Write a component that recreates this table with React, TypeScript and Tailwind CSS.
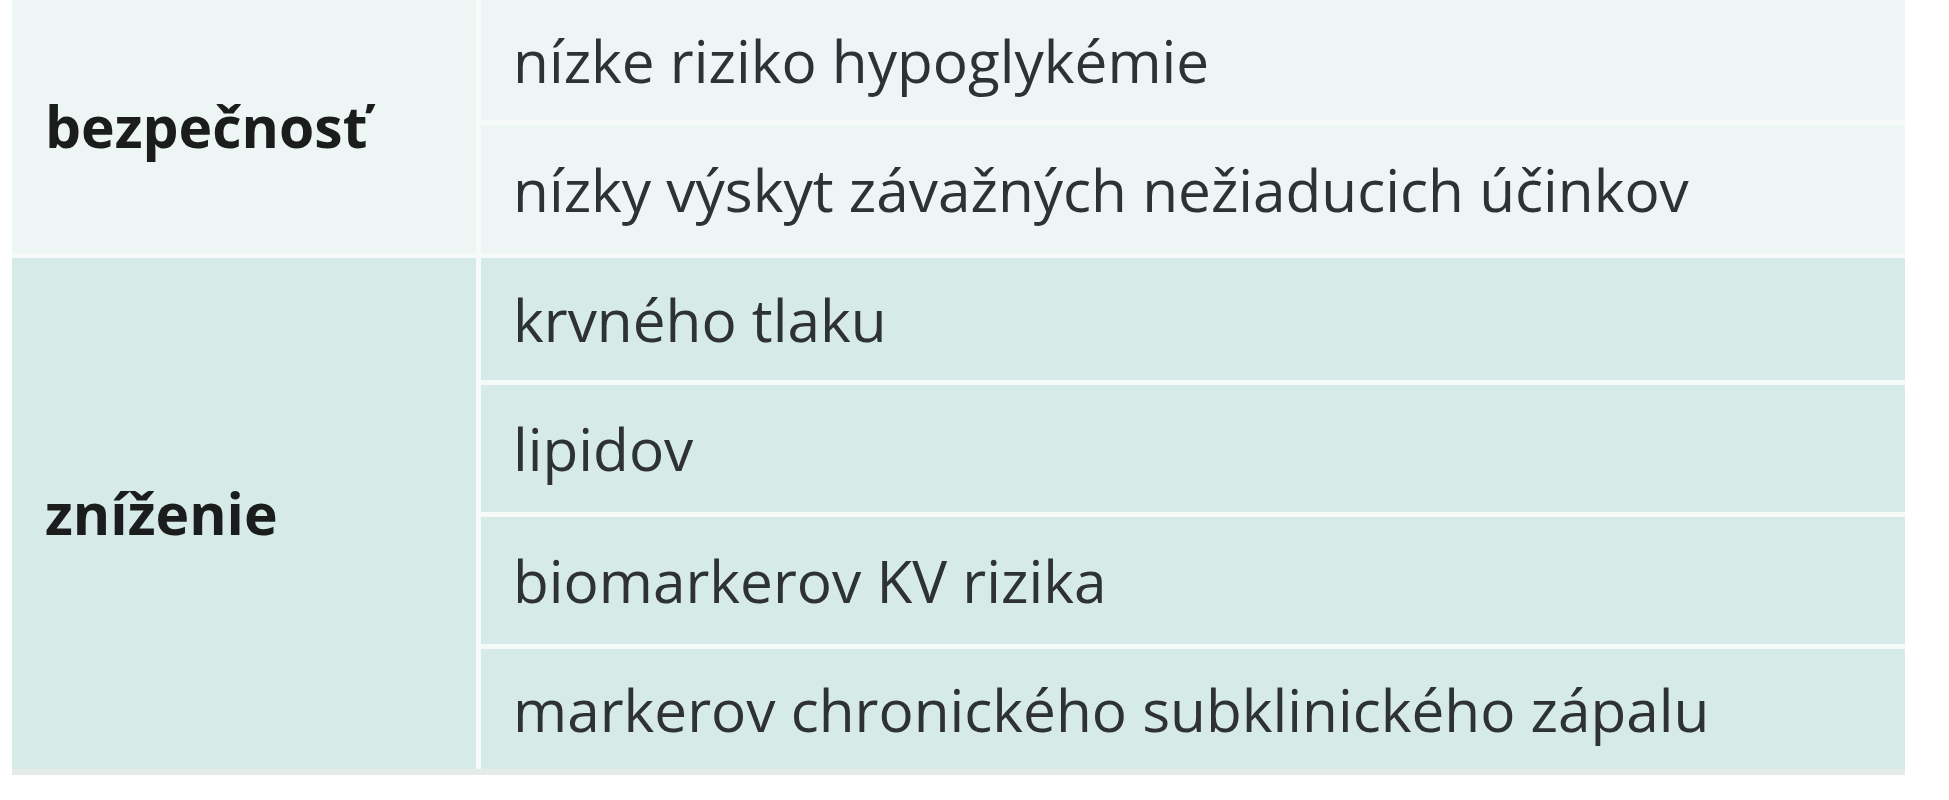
const groups = [
  {
    label: "bezpečnosť",
    bg: "bg-[#edf6f4]",
    rows: [
      { text: "nízke riziko hypoglykémie", h: "h-[120px]" },
      { text: "nízky výskyt závažných nežiaducich účinkov", h: "h-[128px]" },
    ],
  },
  {
    label: "zníženie",
    bg: "bg-[#d6eae7]",
    rows: [
      { text: "krvného tlaku", h: "h-[122px]" },
      { text: "lipidov", h: "h-[127px]" },
      { text: "biomarkerov KV rizika", h: "h-[127px]" },
      { text: "markerov chronického subklinického zápalu", h: "h-[120px]" },
    ],
  },
]

export default function App() {
  return (
    <div className="w-[1949px] h-[800px] bg-white font-['Open_Sans',sans-serif]">
      <div className="ml-[12px] w-[1893px] flex flex-col gap-[5px] bg-[#f6fbfa]">
        {groups.map((g) => (
          <div key={g.label} className="flex gap-[5px]">
            <div className={`w-[464px] shrink-0 flex items-center pl-[33px] ${g.bg}`}>
              <span className="text-[57px] font-bold text-[#1b1d1d] leading-none">{g.label}</span>
            </div>
            <div className="flex-1 flex flex-col gap-[5px]">
              {g.rows.map((r) => (
                <div key={r.text} className={`${r.h} flex items-center pl-[32px] ${g.bg}`}>
                  <span className="text-[58.5px] text-[#2e3233] leading-none">{r.text}</span>
                </div>
              ))}
            </div>
          </div>
        ))}
      </div>
      <div className="ml-[12px] w-[1893px] h-[6px] bg-[#e6ebea]" />
    </div>
  )
}
